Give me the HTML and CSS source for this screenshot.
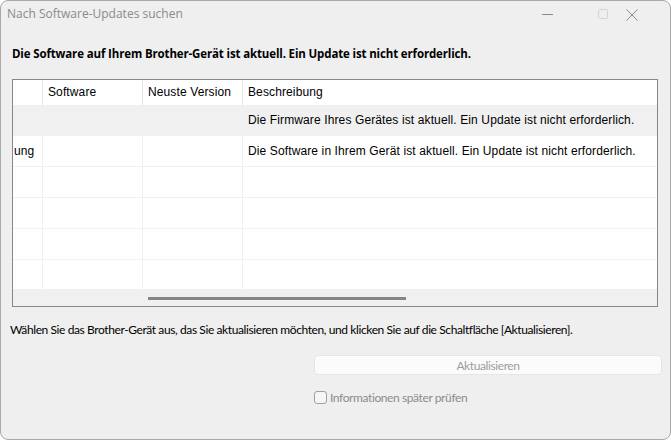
FILE: index.html
```html
<!DOCTYPE html>
<html lang="de">
<head>
    <meta charset="UTF-8">
    <meta name="viewport" content="width=device-width, initial-scale=1.0">
    <title>Nach Software-Updates suchen</title>
    <link rel="stylesheet" href="styles.css">
</head>
<body>
    <div class="fenster">
        <div class="titelleiste">
            <span class="titel">Nach Software-Updates suchen</span>
            <div class="fensterknoepfe">
                <svg class="knopf minimieren" width="16" height="16" viewBox="0 0 16 16">
                    <line x1="2" y1="13.5" x2="13" y2="13.5" stroke="#8a8a8a" stroke-width="1"/>
                </svg>
                <svg class="knopf maximieren" width="16" height="16" viewBox="0 0 16 16">
                    <rect x="3.5" y="8.5" width="9" height="9" rx="1" fill="none" stroke="#d2d2d2" stroke-width="1"/>
                </svg>
                <svg class="knopf schliessen" width="16" height="16" viewBox="0 0 16 16">
                    <path d="M3.5 8.5 L14.5 19.5 M14.5 8.5 L3.5 19.5" stroke="#8a8a8a" stroke-width="1"/>
                </svg>
            </div>
        </div>

        <div class="inhalt">
            <p class="status">Die Software auf Ihrem Brother-Gerät ist aktuell. Ein Update ist nicht erforderlich.</p>

            <div class="tabelle">
                <div class="kopf">
                    <div class="zelle"></div>
                    <div class="zelle">Software</div>
                    <div class="zelle">Neuste Version</div>
                    <div class="zelle">Beschreibung</div>
                </div>
                <div class="koerper">
                    <div class="zeile gewaehlt">
                        <div class="zelle"></div>
                        <div class="zelle"></div>
                        <div class="zelle"></div>
                        <div class="zelle">Die Firmware Ihres Gerätes ist aktuell. Ein Update ist nicht erforderlich.</div>
                    </div>
                    <div class="zeile">
                        <div class="zelle">ung</div>
                        <div class="zelle"></div>
                        <div class="zelle"></div>
                        <div class="zelle">Die Software in Ihrem Gerät ist aktuell. Ein Update ist nicht erforderlich.</div>
                    </div>
                    <div class="zeile"><div class="zelle"></div><div class="zelle"></div><div class="zelle"></div><div class="zelle"></div></div>
                    <div class="zeile"><div class="zelle"></div><div class="zelle"></div><div class="zelle"></div><div class="zelle"></div></div>
                    <div class="zeile"><div class="zelle"></div><div class="zelle"></div><div class="zelle"></div><div class="zelle"></div></div>
                    <div class="zeile"><div class="zelle"></div><div class="zelle"></div><div class="zelle"></div><div class="zelle"></div></div>
                </div>
                <div class="scrollleiste">
                    <div class="daumen"></div>
                </div>
            </div>

            <p class="hinweis">Wählen Sie das Brother-Gerät aus, das Sie aktualisieren möchten, und klicken Sie auf die Schaltfläche [Aktualisieren].</p>

            <div class="aktionen">
                <button class="aktualisieren" disabled>Aktualisieren</button>
                <label class="spaeter">
                    <span class="kasten"></span>
                    Informationen später prüfen
                </label>
            </div>
        </div>
    </div>
</body>
</html>
```

FILE: styles.css
```css
body {
    margin: 0;
    background-color: #ffffff;
    font-family: Lato, "Open Sans", sans-serif;
}

.fenster {
    width: 669px;
    height: 438px;
    background-color: #efefef;
    border: 1px solid #a8a8a8;
    border-radius: 8px;
    display: flex;
    flex-direction: column;
    overflow: hidden;
}

.titelleiste {
    height: 30px;
    display: flex;
    justify-content: space-between;
}

.titel {
    margin: 5px 0 0 6px;
    font-family: "Open Sans", "Noto Sans", sans-serif;
    font-size: 12px;
    line-height: 16px;
    color: #8a8a8a;
}

.fensterknoepfe {
    display: flex;
    margin-right: 31px;
}

.knopf {
    display: block;
    overflow: visible;
}

.maximieren {
    margin-left: 39px;
}

.schliessen {
    margin-left: 12px;
}

.inhalt {
    display: flex;
    flex-direction: column;
    padding: 0 8px 0 9px;
}

.status {
    margin: 15px 0 0 2px;
    font-family: "Open Sans", "Noto Sans", sans-serif;
    font-size: 11.5px;
    line-height: 16px;
    font-weight: bold;
    letter-spacing: -0.14px;
    color: #000;
}

.tabelle {
    margin: 17px 4px 0 2px;
    border: 1px solid #828790;
    background-color: #ffffff;
    font-family: "Liberation Sans", Arial, sans-serif;
    font-size: 12px;
    letter-spacing: 0.12px;
    color: #000;
}

.kopf,
.zeile {
    display: grid;
    grid-template-columns: 30px 100px 100px 1fr;
}

.kopf {
    height: 25px;
}

.kopf .zelle {
    display: flex;
    align-items: center;
    padding-left: 5px;
    padding-bottom: 1px;
    border-right: 1px solid #e5e5e5;
}

.kopf .zelle:last-child {
    border-right: none;
}

.koerper {
    height: 184px;
    overflow: hidden;
}

.zeile {
    height: 30px;
    border-bottom: 1px solid #f0f0f0;
}

.zeile .zelle {
    display: flex;
    align-items: center;
    padding-left: 5px;
    border-right: 1px solid #f0f0f0;
    white-space: nowrap;
}

.zeile .zelle:first-child {
    padding-left: 1px;
}

.zeile .zelle:last-child {
    border-right: none;
}

.gewaehlt {
    background-color: #f0f0f0;
}

.scrollleiste {
    height: 17px;
    background-color: #f0f0f0;
    display: flex;
    align-items: center;
}

.daumen {
    width: 258px;
    height: 3px;
    margin-left: 135px;
    margin-top: 1px;
    background-color: #858585;
}

.hinweis {
    margin: 15px 0 0 0;
    font-size: 12px;
    line-height: 16px;
    letter-spacing: -0.4px;
    color: #000;
}

.aktionen {
    display: flex;
    flex-direction: column;
    align-items: flex-start;
    margin-left: 304px;
}

.aktualisieren {
    margin-top: 17px;
    width: 348px;
    height: 20px;
    padding: 0;
    border: 1px solid #e6e6e6;
    border-radius: 4px;
    background-color: #fbfbfb;
    font-family: Lato, "Open Sans", sans-serif;
    font-size: 12px;
    letter-spacing: -0.4px;
    color: #9d9d9d;
}

.spaeter {
    display: flex;
    align-items: center;
    margin-top: 15px;
    font-size: 12px;
    letter-spacing: -0.4px;
    color: #8c8c8c;
}

.kasten {
    width: 11px;
    height: 11px;
    border: 1px solid #a0a0a0;
    border-radius: 3px;
    background-color: #f6f6f6;
    margin-right: 3px;
}
```
